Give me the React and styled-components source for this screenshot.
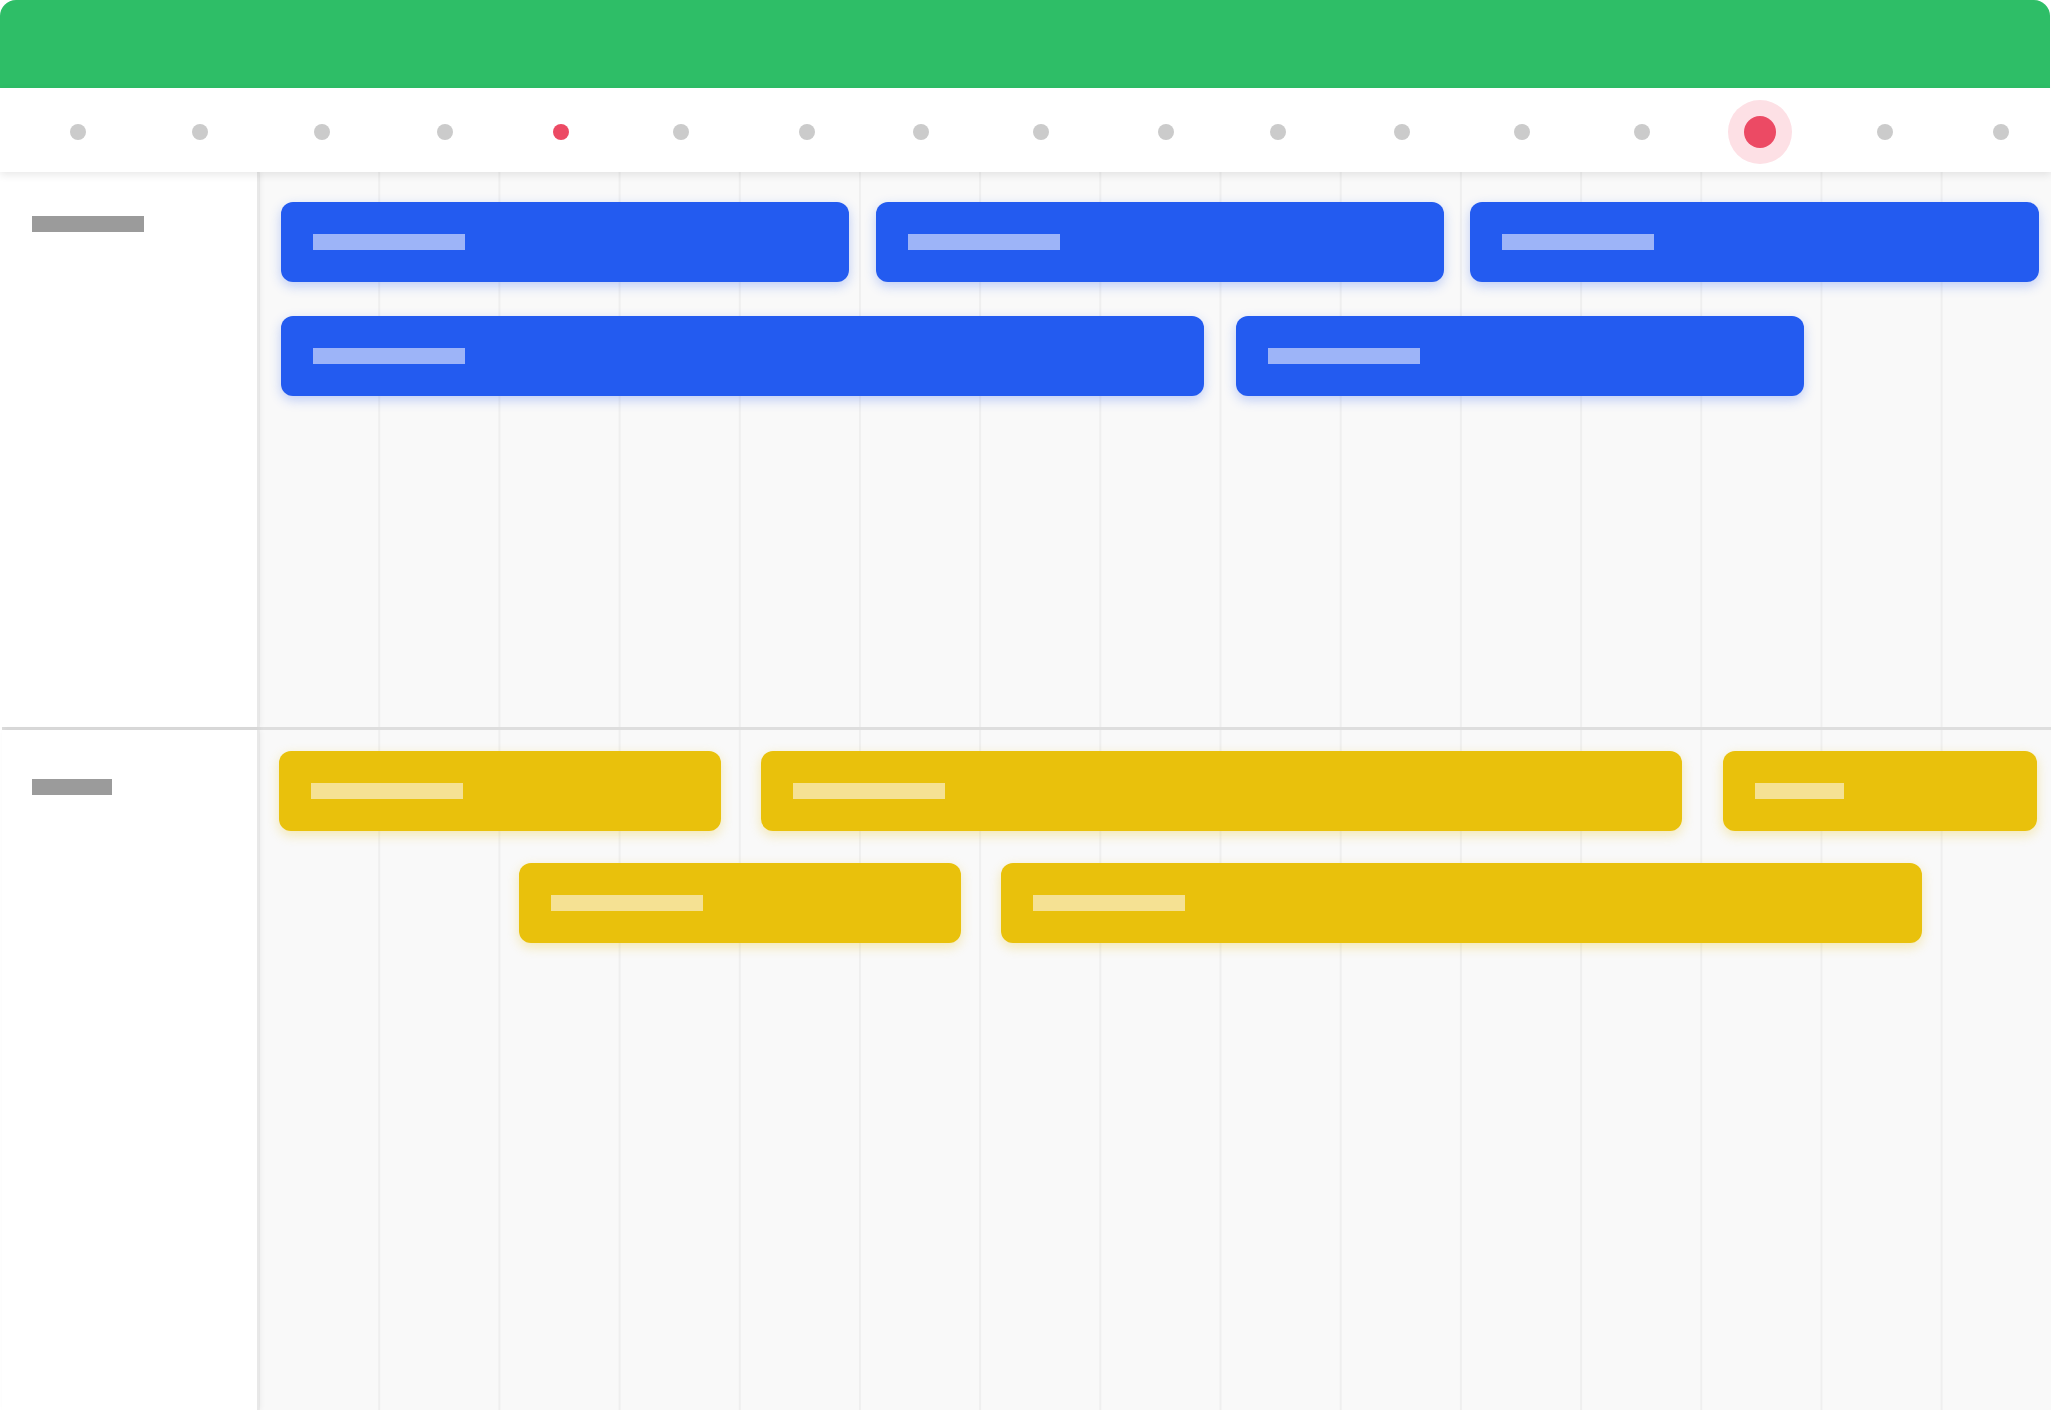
import React from "react";
import styled, { createGlobalStyle } from "styled-components";

const GlobalStyle = createGlobalStyle`
  html, body {
    margin: 0;
    padding: 0;
    background: #ffffff;
    font-family: "Inter", "Liberation Sans", sans-serif;
  }
  #root {
    min-height: 100vh;
  }
`;

const Page = styled.div`
  display: flex;
  flex-direction: column;
  height: 100vh;
  overflow: hidden;
  background: #ffffff;
`;

const TopBar = styled.header`
  height: 88px;
  flex-shrink: 0;
  margin-right: 1px;
  background: #2ebe67;
  border-radius: 16px 16px 0 0;
`;

const Ticks = styled.div`
  position: relative;
  z-index: 2;
  box-sizing: border-box;
  height: 84px;
  flex-shrink: 0;
  padding: 36px 0 32px 0;
  display: flex;
  align-items: center;
  background: #ffffff;
  box-shadow: 0 3px 8px rgba(0, 0, 0, 0.09);
`;

const Dot = styled.span`
  flex-shrink: 0;
  width: ${(p) => (p.$big ? "32px" : "16px")};
  height: ${(p) => (p.$big ? "32px" : "16px")};
  margin-right: ${(p) => (p.$big ? "-8px" : "0")};
  border-radius: 50%;
  background: ${(p) => (p.$active ? "#ec4a64" : "#cbcbcb")};
  box-shadow: ${(p) => (p.$big ? "0 0 0 16px #fde0e5" : "none")};
`;

const Section = styled.section`
  display: flex;
  flex-shrink: 0;
  height: ${(p) => (p.$fill ? "auto" : "555px")};
  flex: ${(p) => (p.$fill ? "1" : "none")};
  border-top: ${(p) => (p.$divided ? "3px solid #dedede" : "none")};
  margin-left: ${(p) => (p.$divided ? "2px" : "0")};
`;

const Sidebar = styled.div`
  box-sizing: border-box;
  width: ${(p) => (p.$divided ? "257px" : "259px")};
  flex-shrink: 0;
  padding: ${(p) => p.$top}px 0 0 ${(p) => (p.$divided ? "30px" : "32px")};
  background: #ffffff;
  border-right: 2px solid #e8e8e8;
  box-shadow: 2px 0 5px rgba(0, 0, 0, 0.05);
  position: relative;
  z-index: 1;
`;

const GroupLabel = styled.div`
  width: ${(p) => p.$w}px;
  height: 16px;
  background: #9b9b9b;
`;

const Lanes = styled.div`
  flex: 1;
  display: flex;
  flex-direction: column;
  gap: ${(p) => p.$gap}px;
  padding-top: ${(p) => p.$top}px;
  background-color: #f9f9f9;
  background-image: linear-gradient(
    to right,
    transparent calc(100% - 2px),
    #efefef calc(100% - 2px)
  );
  background-size: 120.2px 100%;
  background-position: 1px 0;
`;

const Lane = styled.div`
  display: flex;
  height: 80px;
`;

const Bar = styled.div`
  box-sizing: border-box;
  flex-shrink: 0;
  height: 80px;
  display: flex;
  align-items: center;
  padding-left: 32px;
  border-radius: 12px;
  background: ${(p) => (p.$tone === "blue" ? "#235bf0" : "#e9c10c")};
  box-shadow: ${(p) =>
    p.$tone === "blue"
      ? "0 4px 12px rgba(35, 91, 240, 0.28)"
      : "0 4px 12px rgba(233, 193, 12, 0.3)"};
`;

const BarLabel = styled.span`
  width: ${(p) => p.$w}px;
  height: 16px;
  background: ${(p) => (p.$tone === "blue" ? "#9db4f8" : "#f5e193")};
`;

// tick centres along the time axis, in px
const tickCentres = [
  78, 200, 322, 445, 561, 681, 807, 921, 1041, 1166, 1278, 1402, 1522, 1642,
  1760, 1885, 2001,
];
const activeTicks = { 4: "small", 14: "big" };

const groups = [
  {
    tone: "blue",
    label: 112,
    labelTop: 44,
    laneTop: 30,
    laneGap: 34,
    lanes: [
      [
        { offset: 22, width: 568, label: 152 },
        { offset: 27, width: 568, label: 152 },
        { offset: 26, width: 569, label: 152 },
      ],
      [
        { offset: 22, width: 923, label: 152 },
        { offset: 32, width: 568, label: 152 },
      ],
    ],
  },
  {
    tone: "yellow",
    label: 80,
    labelTop: 49,
    laneTop: 21,
    laneGap: 32,
    lanes: [
      [
        { offset: 20, width: 442, label: 152 },
        { offset: 40, width: 921, label: 152 },
        { offset: 41, width: 314, label: 89 },
      ],
      [
        { offset: 260, width: 442, label: 152 },
        { offset: 40, width: 921, label: 152 },
      ],
    ],
  },
];

export default function App() {
  let prevEnd = 0;
  return (
    <>
      <GlobalStyle />
      <Page>
        <TopBar />
        <Ticks>
          {tickCentres.map((c, i) => {
            const big = activeTicks[i] === "big";
            const half = big ? 16 : 8;
            const gap = c - half - prevEnd;
            prevEnd = c + 8;
            return (
              <Dot
                key={i}
                $active={!!activeTicks[i]}
                $big={big}
                style={{ marginLeft: gap }}
              />
            );
          })}
        </Ticks>
        {groups.map((g, gi) => (
          <Section key={g.tone} $divided={gi > 0} $fill={gi === groups.length - 1}>
            <Sidebar $top={g.labelTop} $divided={gi > 0}>
              <GroupLabel $w={g.label} />
            </Sidebar>
            <Lanes $top={g.laneTop} $gap={g.laneGap}>
              {g.lanes.map((lane, li) => (
                <Lane key={li}>
                  {lane.map((bar, bi) => (
                    <Bar
                      key={bi}
                      $tone={g.tone}
                      style={{ marginLeft: bar.offset, width: bar.width }}
                    >
                      <BarLabel $tone={g.tone} $w={bar.label} />
                    </Bar>
                  ))}
                </Lane>
              ))}
            </Lanes>
          </Section>
        ))}
      </Page>
    </>
  );
}
